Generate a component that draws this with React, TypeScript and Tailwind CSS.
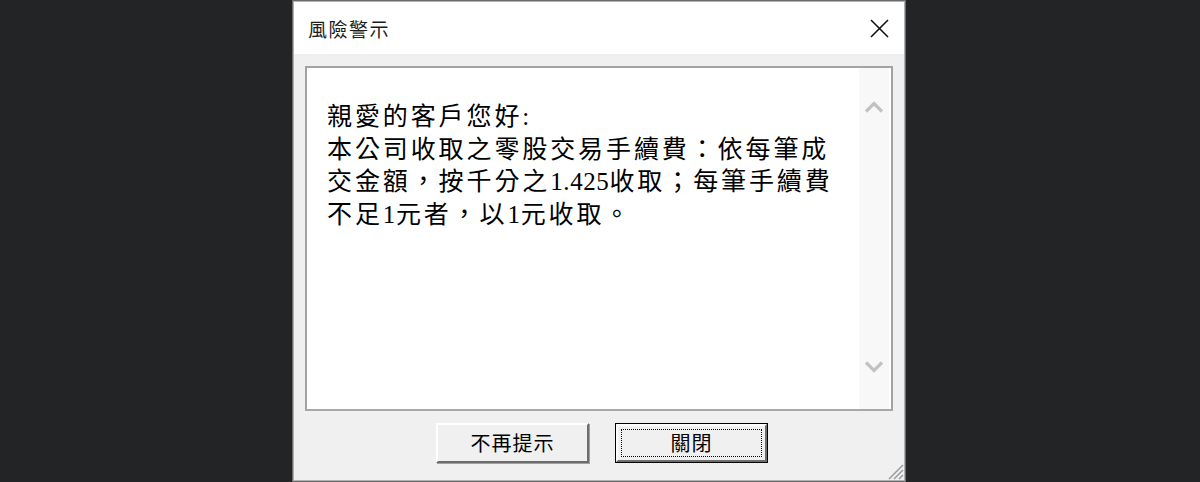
import React from "react";

const bodyFont = {
  fontFamily: '"Liberation Serif", "Noto Sans CJK TC", serif',
};
const uiFont = {
  fontFamily: '"Noto Sans CJK TC", "Noto Sans", sans-serif',
};

function Chevron({ up }: { up?: boolean }) {
  return (
    <svg width="20" height="12" viewBox="0 0 20 12">
      <path
        d={up ? "M2 10.5 L10 2.5 L18 10.5" : "M2 1.5 L10 9.5 L18 1.5"}
        fill="none"
        stroke="#c2c2c2"
        strokeWidth="3.2"
      />
    </svg>
  );
}

function N({ children }: { children: React.ReactNode }) {
  return <span className="tracking-[0.6px]">{children}</span>;
}

export default function App() {
  return (
    <div className="w-full h-[482px] bg-[#232425] flex pl-[292px] overflow-hidden">
      <div className="w-[614px] h-[482px] border border-[#6c6c6c] flex flex-col">
        <div className="flex-1 border border-[#b0b0b0] flex flex-col">
          {/* title bar */}
          <div className="h-[52px] bg-white flex items-center justify-between pl-[14px] pr-[15px]">
            <span className="text-[19px] text-[#1b1b1b] tracking-[1.5px] leading-none" style={uiFont}>
              風險警示
            </span>
            <svg width="19" height="19" viewBox="0 0 19 19">
              <path d="M1 1 L18 18 M18 1 L1 18" stroke="#111" strokeWidth="1.6" />
            </svg>
          </div>
          {/* body */}
          <div className="flex-1 bg-[#f0f0f0] flex flex-col px-[11px] pt-[12px] relative">
            <div className="h-[345px] border-2 border-[#a3a3a3] border-b-[#a8a8a8] bg-white flex">
              <div
                className="flex-1 pl-[20px] pt-[33px] text-[25px] leading-[32.5px] tracking-[2.9px] text-black whitespace-nowrap"
                style={bodyFont}
              >
                <div>親愛的客戶您好:</div>
                <div>本公司收取之零股交易手續費：依每筆成</div>
                <div>
                  交金額，按千分之<N>1.425</N>收取；每筆手續費
                </div>
                <div>
                  不足<N>1</N>元者，以<N>1</N>元收取。
                </div>
              </div>
              <div className="w-[30px] mr-[2px] bg-[#f8f8f8] flex flex-col items-center justify-between pt-[33px] pb-[36px]">
                <Chevron up />
                <Chevron />
              </div>
            </div>
            <div className="flex justify-center gap-[26px] mt-[12px] pl-[6px]">
              <button
                className="w-[153px] h-[40px] bg-[#f0f0f0] border-2 border-t-white border-l-white border-r-[#6d6d6d] border-b-[#6d6d6d] shadow-[1px_1px_0_#a0a0a0] flex items-center justify-center text-[20px] text-black tracking-[1px]"
                style={uiFont}
              >
                不再提示
              </button>
              <button
                className="w-[153px] h-[40px] bg-[#f0f0f0] border border-black flex items-stretch"
                style={uiFont}
              >
                <div className="flex-1 border-2 border-t-white border-l-white border-r-[#6d6d6d] border-b-[#6d6d6d] p-[3px] flex">
                  <div className="flex-1 border border-dotted border-black flex items-center justify-center text-[20px] text-black tracking-[1px]">
                    關閉
                  </div>
                </div>
              </button>
            </div>
            <svg
              className="absolute right-[0px] bottom-[0px]"
              width="20"
              height="20"
              viewBox="0 0 20 20"
            >
              <path d="M19 5 L5 19 M19 10 L10 19 M19 15 L15 19" stroke="#9a9a9a" strokeWidth="1.5" />
            </svg>
          </div>
        </div>
      </div>
    </div>
  );
}
